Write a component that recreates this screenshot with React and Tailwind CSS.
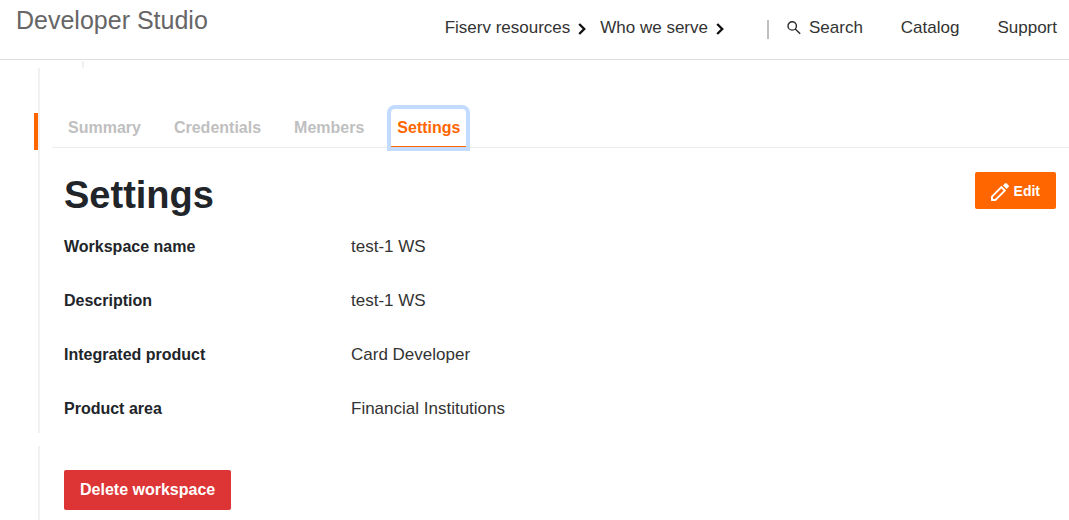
const fields = [
  ['Workspace name', 'test-1 WS'],
  ['Description', 'test-1 WS'],
  ['Integrated product', 'Card Developer'],
  ['Product area', 'Financial Institutions'],
];

const tabs = ['Summary', 'Credentials', 'Members', 'Settings'];

function Chevron() {
  return (
    <svg className="mt-0.5 h-3 w-2 shrink-0" viewBox="0 0 8 12" fill="none" stroke="#111" strokeWidth="2.4" aria-hidden="true">
      <path d="M1.2 1 6.2 6 1.2 11" />
    </svg>
  );
}

function SearchIcon() {
  return (
    <svg className="h-[14px] w-[14px] shrink-0" viewBox="0 0 14 14" fill="none" stroke="#2b2b2b" strokeWidth="1.4" aria-hidden="true">
      <circle cx="5.2" cy="4.9" r="4.2" />
      <path d="m8.2 7.9 5 4.9" />
    </svg>
  );
}

function PencilIcon() {
  return (
    <svg className="mt-0.5 h-[18px] w-[18px] shrink-0" viewBox="0 0 18 18" fill="none" aria-hidden="true">
      <path d="M1 17v-3.4L10.4 4.2 13.8 7.6 4.4 17z" stroke="#fff" strokeWidth="1.9" />
      <path d="M12 2.4 13.9.5a1.3 1.3 0 0 1 1.8 0l1.8 1.8a1.3 1.3 0 0 1 0 1.8L15.6 6z" fill="#fff" />
    </svg>
  );
}

export default function App() {
  return (
    <div className="flex min-h-screen flex-col bg-white font-['Liberation_Sans',Arial,sans-serif] text-[#212529]">
      <header className="flex h-[60px] items-start justify-between border-b border-[#dedfe1] pr-3 pl-4">
        <a href="#" className="mt-1 text-[25px] leading-8 text-[#666]">Developer Studio</a>
        <nav className="flex h-14 items-center text-[17px] leading-6 text-[#333]">
          <button type="button" className="flex items-center gap-2">Fiserv resources<Chevron /></button>
          <button type="button" className="ml-3.5 flex items-center gap-2">Who we serve<Chevron /></button>
          <span className="mt-0.5 ml-[43px] h-[19px] w-0.5 bg-[#bfbfbf]" />
          <a href="#" className="ml-[18px] flex items-center gap-2"><SearchIcon />Search</a>
          <a href="#" className="ml-[38px]">Catalog</a>
          <a href="#" className="ml-[38px]">Support</a>
        </nav>
      </header>

      <div className="mt-px ml-[82px] h-[7px] w-0.5 bg-[#f1f1f3]" />

      <div className="flex">
        <div className="mt-[45px] ml-[34px] h-[37px] w-1 shrink-0 bg-[#ff6600]" />
        <main className="min-w-0 grow border-l-2 border-[#f1f1f3] pt-[41px] pb-3 pl-3">
          <div role="tablist" className="flex gap-[21px] border-b border-[#ebebeb] pl-2.5 text-[16px] font-bold leading-6">
            {tabs.map((tab) => (
              <button
                key={tab}
                type="button"
                role="tab"
                aria-selected={tab === 'Settings'}
                className={
                  tab === 'Settings'
                    ? 'rounded-t border-b border-[#ff6600] px-1.5 pt-[7px] pb-1.5 text-[#ff6600] ring-4 ring-[#c2dbff]'
                    : 'border-b border-transparent px-1.5 pt-[7px] pb-1.5 text-[#bfbfbf]'
                }
              >
                {tab}
              </button>
            ))}
          </div>

          <div className="pr-[13px] pl-3">
            <div className="flex items-start justify-between pt-6">
              <h1 className="text-[38px] font-bold leading-[46px]">Settings</h1>
              <button type="button" className="flex h-[37px] items-center gap-[5px] rounded-[2px] bg-[#ff6600] px-4 text-[14px] font-bold leading-5 text-white">
                <PencilIcon />
                Edit
              </button>
            </div>
            <dl className="mt-[17px] flex flex-col gap-[30px] leading-6">
              {fields.map(([label, value]) => (
                <div key={label} className="flex">
                  <dt className="w-[287px] shrink-0 text-[16px] font-bold">{label}</dt>
                  <dd className="text-[17px] text-[#333]">{value}</dd>
                </div>
              ))}
            </dl>
          </div>
        </main>
      </div>

      <section className="mt-[13px] ml-[38px] grow border-l-2 border-[#f1f1f3] px-6 pt-6 pb-2.5">
        <button type="button" className="h-10 rounded-[2px] bg-[#dd3435] px-4 text-[16px] font-bold text-white">
          Delete workspace
        </button>
      </section>
    </div>
  );
}
